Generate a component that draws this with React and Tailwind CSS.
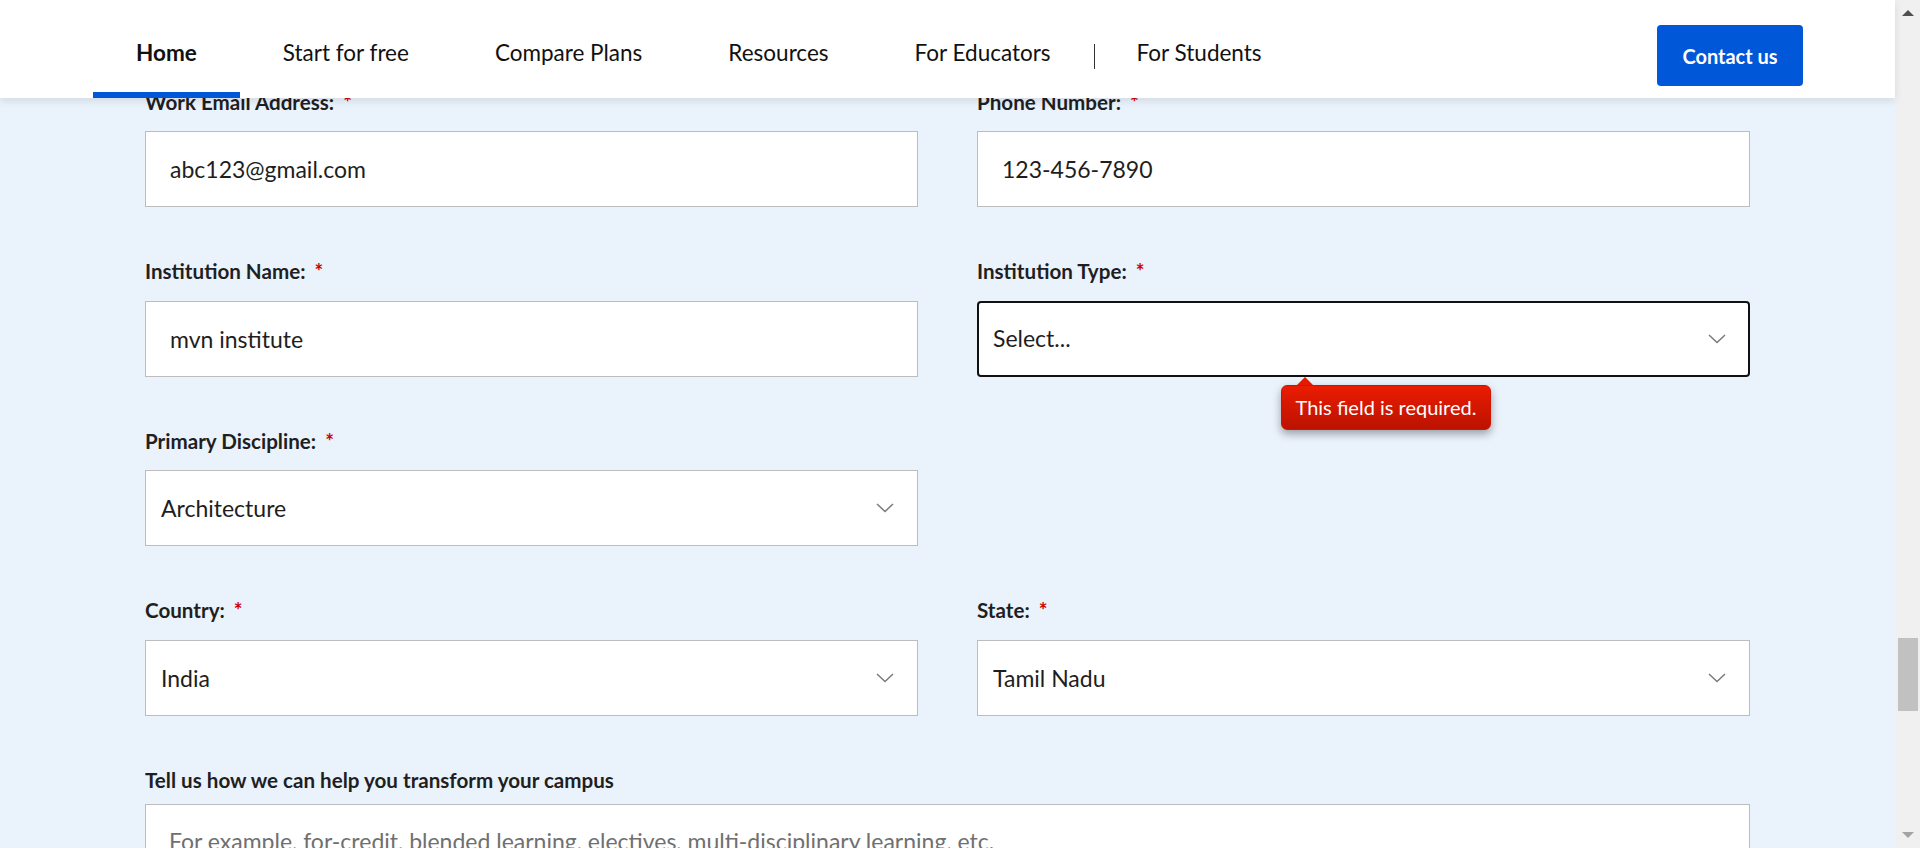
import { useState } from "react";

const navLinks = ["Start for free", "Compare Plans", "Resources", "For Educators"];

const Chevron = () => (
  <svg width="18" height="10" viewBox="0 0 18 10" fill="none">
    <path d="M1 1l8 7.5L17 1" stroke="#7a7a7a" strokeWidth="1.5" />
  </svg>
);

const Label = ({ children, required = true, className = "mb-[17px]" }) => (
  <label className={`flex items-center h-[24px] text-[20.6px] font-bold text-[#1f1f1f] ${className}`}>
    {children}
    {required && <span className="ml-[9px] text-[#cc0000]">*</span>}
  </label>
);

const TextField = ({ label, value }) => {
  const [val, setVal] = useState(value);
  return (
    <div className="mb-[52.6px]">
      <Label>{label}</Label>
      <input
        type="text"
        value={val}
        onChange={(e) => setVal(e.target.value)}
        className="w-full h-[76px] bg-white border border-[#bdbdbd] px-[24px] text-[23px] text-[#1e1e1e] outline-none"
      />
    </div>
  );
};

const SelectField = ({ label, value, focused, children }) => (
  <div className="mb-[52.6px]">
    <Label>{label}</Label>
    <div className="relative">
      <div
        className={
          focused
            ? "flex items-center justify-between h-[76px] bg-white border-2 border-[#111] rounded-[4px] pl-[14px] pr-[22px] text-[23px] text-[#1e1e1e]"
            : "flex items-center justify-between h-[76px] bg-white border border-[#bdbdbd] pl-[15px] pr-[23px] text-[23px] text-[#1e1e1e]"
        }
      >
        <span>{value}</span>
        <Chevron />
      </div>
      {children}
    </div>
  </div>
);

const App = () => {
  return (
    <div className="flex h-[848px] overflow-hidden bg-[#eaf2fc] font-['Lato',sans-serif]">
      <div className="flex-1 flex flex-col min-w-0">
        <nav className="relative z-10 flex justify-between h-[98px] shrink-0 bg-white pl-[93px] pr-[92px] shadow-[0_3px_8px_rgba(0,0,0,0.1)]">
          <div className="flex items-stretch">
            <a className="flex items-center px-[43px] pt-[14px] border-b-[6px] border-[#0057d8] text-[22.5px] font-bold text-[#111]">
              Home
            </a>
            {navLinks.map((l) => (
              <a key={l} className="flex items-center px-[43px] pt-[14px] border-b-[6px] border-transparent text-[22.5px] text-[#111]">
                {l}
              </a>
            ))}
            <div className="self-start mt-[44px] w-px h-[25px] bg-[#333]" />
            <a className="flex items-center px-[42px] pt-[14px] border-b-[6px] border-transparent text-[22.5px] text-[#111]">
              For Students
            </a>
          </div>
          <button className="self-start mt-[25px] w-[146px] h-[61px] rounded-[4px] bg-[#0057d8] text-white text-[20px] font-bold">
            Contact us
          </button>
        </nav>

        <main className="flex-1 overflow-hidden px-[145px]">
          <form className="-mt-[8px] grid grid-cols-2 gap-x-[59px]">
            <TextField label="Work Email Address:" value="abc123@gmail.com" />
            <TextField label="Phone Number:" value="123-456-7890" />
            <TextField label="Institution Name:" value="mvn institute" />
            <SelectField label="Institution Type:" value="Select..." focused>
              <div className="absolute top-full left-[304px] mt-[8px] z-10">
                <div className="absolute -top-[8px] left-[16px] w-0 h-0 border-l-[8px] border-r-[8px] border-b-[8px] border-l-transparent border-r-transparent border-b-[#e21a00]" />
                <div className="w-[210px] h-[45px] flex items-center justify-center rounded-[6px] border border-[#d01400] bg-linear-to-b from-[#ea1c00] to-[#bc1200] text-white text-[20px] shadow-[0_4px_8px_rgba(0,0,0,0.35)]">
                  This field is required.
                </div>
              </div>
            </SelectField>
            <SelectField label="Primary Discipline:" value="Architecture" />
            <div />
            <SelectField label="Country:" value="India" />
            <SelectField label="State:" value="Tamil Nadu" />
            <div className="col-span-2">
              <Label required={false} className="mb-[12px]">
                Tell us how we can help you transform your campus
              </Label>
              <textarea
                rows={4}
                placeholder="For example, for-credit, blended learning, electives, multi-disciplinary learning, etc."
                className="block w-full h-[160px] resize-none bg-white border border-[#bdbdbd] px-[23px] pt-[21px] text-[23px] leading-[30px] text-[#1e1e1e] placeholder:text-[#707070] outline-none"
              />
            </div>
          </form>
        </main>
      </div>

      <div className="w-[25px] shrink-0 flex flex-col items-center bg-[#f0f0f0]">
        <div className="mt-[10px] w-0 h-0 border-l-[6px] border-r-[6px] border-b-[6px] border-l-transparent border-r-transparent border-b-[#505050]" />
        <div className="mt-[622px] w-[20px] h-[73px] bg-[#c1c1c1]" />
        <div className="mt-auto mb-[10px] w-0 h-0 border-l-[6px] border-r-[6px] border-t-[6px] border-l-transparent border-r-transparent border-t-[#a3a3a3]" />
      </div>
    </div>
  );
};

export default App;
